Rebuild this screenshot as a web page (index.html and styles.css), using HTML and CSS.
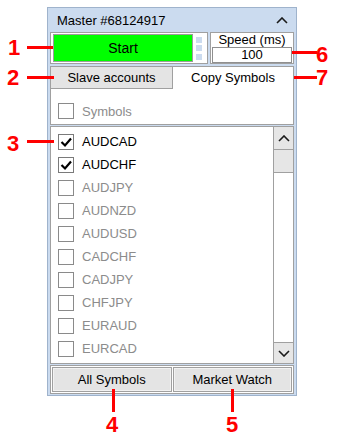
FILE: index.html
```html
<!DOCTYPE html>
<html lang="en">
<head>
    <meta charset="UTF-8">
    <title>Copy Symbols</title>
    <link rel="stylesheet" href="styles.css">
</head>
<body>
    <div class="stage">
        <div class="panel">
            <div class="panel-head">
                <span>Master #68124917</span>
                <svg class="chev" width="12" height="7" viewBox="0 0 12 7"><polyline points="1,6 6,1 11,6" /></svg>
            </div>

            <div class="top-row">
                <div class="start-box">
                    <button class="start-btn">Start</button>
                    <div class="leds"><i></i><i></i><i></i></div>
                </div>
                <div class="speed-box">
                    <div class="speed-label">Speed (ms)</div>
                    <div class="speed-input">100</div>
                </div>
            </div>

            <div class="tabs">
                <div class="tab-bar">
                    <div class="tab">Slave accounts</div>
                    <div class="tab active">Copy Symbols</div>
                </div>
                <div class="tab-body">
                    <div class="row off"><span class="box"></span>Symbols</div>
                </div>
            </div>

            <div class="list">
                <div class="rows" id="rows"></div>
                <div class="scrollbar">
                    <div class="sb-btn up"><svg width="12" height="7" viewBox="0 0 12 7"><polyline points="1,6 6,1 11,6" /></svg></div>
                    <div class="sb-thumb"></div>
                    <div class="sb-track"></div>
                    <div class="sb-btn down"><svg width="12" height="7" viewBox="0 0 12 7"><polyline points="1,1 6,6 11,1" /></svg></div>
                </div>
            </div>

            <div class="actions">
                <button class="act">All Symbols</button>
                <button class="act">Market Watch</button>
            </div>
        </div>

        <!-- callouts -->
        <div class="mark m1">1</div><div class="line h l1"></div>
        <div class="mark m2">2</div><div class="line h l2"></div>
        <div class="mark m3">3</div><div class="line h l3"></div>
        <div class="mark m6">6</div><div class="line h l6"></div>
        <div class="mark m7">7</div><div class="line h l7"></div>
        <div class="mark m4">4</div><div class="line v l4"></div>
        <div class="mark m5">5</div><div class="line v l5"></div>
    </div>

    <script>
        const symbols = [
            ['AUDCAD', true], ['AUDCHF', true], ['AUDJPY', false], ['AUDNZD', false],
            ['AUDUSD', false], ['CADCHF', false], ['CADJPY', false], ['CHFJPY', false],
            ['EURAUD', false], ['EURCAD', false]
        ];
        const tick = '<svg width="14" height="14" viewBox="0 0 14 14"><polyline points="2.5,7 6,10.5 12,3.5" /></svg>';
        const rows = document.getElementById('rows');
        symbols.forEach(([name, on]) => {
            const row = document.createElement('div');
            row.className = on ? 'row on' : 'row off';
            row.innerHTML = `<span class="box">${on ? tick : ''}</span>${name}`;
            rows.appendChild(row);
        });
    </script>
</body>
</html>
```

FILE: styles.css
```css
body {
    margin: 0;
    font-family: "Liberation Sans", Arial, sans-serif;
    font-size: 13px;
    color: #000;
    background: #fff;
}

.stage {
    position: relative;
    width: 345px;
    height: 440px;
    box-sizing: border-box;
    padding: 7px 0 0 47px;
}

.panel {
    width: 250px;
    box-sizing: border-box;
    border: 1px solid #9fb3cc;
    background: #cbdbef;
    padding: 0 2px 1px;
}

.panel-head {
    height: 24px;
    display: flex;
    align-items: center;
    justify-content: space-between;
    padding: 0 6px 0 7px;
    color: #000;
}

.chev polyline,
.sb-btn polyline {
    fill: none;
    stroke: #1a1a1a;
    stroke-width: 1.6;
}

/* start + speed */
.top-row {
    display: flex;
    gap: 2px;
    height: 32px;
}

.start-box {
    width: 158px;
    box-sizing: border-box;
    border: 1px solid #a0a0a0;
    background: #fff;
    padding: 1px 2px;
    display: flex;
    align-items: center;
}

.start-btn {
    width: 140px;
    height: 28px;
    box-sizing: border-box;
    border: 1px solid #9c9c9c;
    background: #00ff00;
    font-family: inherit;
    font-size: 14px;
    color: #000;
    padding: 0;
}

.leds {
    display: flex;
    flex-direction: column;
    gap: 2.5px;
    margin-left: 3px;
}

.leds i {
    display: block;
    width: 6px;
    height: 6px;
    background: #cbdbef;
}

.speed-box {
    flex: 1;
    box-sizing: border-box;
    border: 1px solid #a0a0a0;
    background: #fff;
    padding: 0 1px;
    display: flex;
    flex-direction: column;
}

.speed-label {
    height: 14px;
    line-height: 14px;
    text-align: center;
}

.speed-input {
    height: 16px;
    box-sizing: border-box;
    border: 1px solid #8f8f8f;
    line-height: 14px;
    text-align: center;
}

/* tabs */
.tabs {
    margin-top: 2px;
    height: 59px;
    box-sizing: border-box;
    border: 1px solid #a0a0a0;
    background: #fff;
}

.tab-bar {
    display: flex;
    height: 22px;
}

.tab {
    width: 122px;
    box-sizing: border-box;
    background: #e4e4e4;
    border-right: 1px solid #a0a0a0;
    border-bottom: 1px solid #a0a0a0;
    line-height: 21px;
    text-align: center;
}

.tab.active {
    flex: 1;
    background: #fff;
    border: none;
    line-height: 22px;
}

.tab-body {
    padding: 14px 0 0 7px;
}

/* rows with checkboxes */
.row {
    height: 23px;
    display: flex;
    align-items: center;
    gap: 8px;
}

.tab-body .row {
    height: 16px;
}

.row.off {
    color: #8c8c8c;
}

.box {
    width: 16px;
    height: 16px;
    box-sizing: border-box;
    border: 1px solid #8a8a8a;
    background: #fff;
    display: flex;
    align-items: center;
    justify-content: center;
}

.row.on .box {
    border-color: #7a7a7a;
}

.box polyline {
    fill: none;
    stroke: #000;
    stroke-width: 2.2;
}

.list {
    margin-top: 1px;
    height: 238px;
    box-sizing: border-box;
    border: 1px solid #a0a0a0;
    background: #fff;
    display: flex;
}

.rows {
    flex: 1;
    padding: 3px 0 0 7px;
}

.scrollbar {
    width: 20px;
    box-sizing: border-box;
    border-left: 1px solid #a0a0a0;
    display: flex;
    flex-direction: column;
}

.sb-btn {
    background: #e6e6e6;
    display: flex;
    align-items: center;
    justify-content: center;
}

.sb-btn.up {
    height: 22px;
    border-bottom: 1px solid #a0a0a0;
}

.sb-btn.down {
    height: 20px;
    border-top: 1px solid #a0a0a0;
}

.sb-thumb {
    height: 22px;
    background: #e6e6e6;
    border-bottom: 1px solid #a0a0a0;
}

.sb-track {
    flex: 1;
}

/* bottom buttons */
.actions {
    margin-top: 1px;
    height: 29px;
    box-sizing: border-box;
    border: 1px solid #a0a0a0;
    background: #fff;
    padding: 1px;
    display: flex;
    gap: 1px;
}

.act {
    width: 121px;
    flex: 1;
    height: 25px;
    box-sizing: border-box;
    border: 1px solid #a0a0a0;
    box-shadow: inset 0 0 0 1px #f2f2f2;
    background: #e4e4e4;
    font-family: inherit;
    font-size: 13px;
    color: #000;
    padding: 0;
}

/* red callouts */
.mark {
    position: absolute;
    font-family: "Liberation Sans", Arial, sans-serif;
    font-weight: bold;
    font-size: 22px;
    line-height: 22px;
    color: #ff0000;
}

.line {
    position: absolute;
    background: #ff0000;
}

.line.h { height: 3px; }
.line.v { width: 3px; }

.m1 { left: 8px; top: 37px; }
.l1 { left: 27px; top: 46px; width: 26px; }

.m2 { left: 7px; top: 67px; }
.l2 { left: 27px; top: 76px; width: 27px; }

.m3 { left: 7px; top: 133px; }
.l3 { left: 27px; top: 140px; width: 27px; }

.m6 { left: 316px; top: 44px; }
.l6 { left: 292px; top: 51px; width: 25px; }

.m7 { left: 316px; top: 67px; }
.l7 { left: 294px; top: 76px; width: 23px; }

.m4 { left: 106px; top: 414px; }
.l4 { left: 112px; top: 389px; height: 23px; }

.m5 { left: 226px; top: 414px; }
.l5 { left: 231px; top: 389px; height: 23px; }
```
